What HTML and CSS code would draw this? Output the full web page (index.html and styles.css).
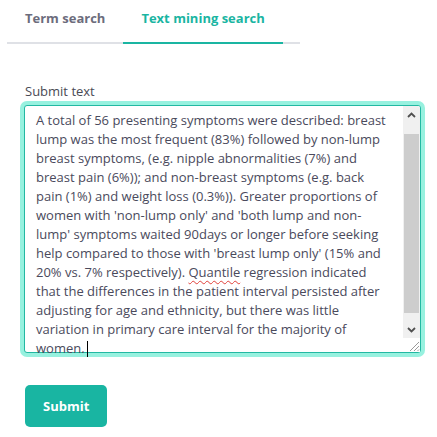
FILE: index.html
```html
<!DOCTYPE html>
<html lang="en">
<head>
<meta charset="utf-8">
<title>Text mining search</title>
<link rel="stylesheet" href="styles.css">
</head>
<body>
  <nav class="tabs">
    <a class="tab">Term search</a>
    <a class="tab tab-active">Text mining search</a>
  </nav>
  <form class="form">
    <label class="label">Submit text</label>
    <div class="textbox">
      <div class="textbox-text">
        <span class="line">A total of 56 presenting symptoms were described: breast</span>
        <span class="line">lump was the most frequent (83%) followed by non-lump</span>
        <span class="line">breast symptoms, (e.g. nipple abnormalities (7%) and</span>
        <span class="line">breast pain (6%)); and non-breast symptoms (e.g. back</span>
        <span class="line">pain (1%) and weight loss (0.3%)). Greater proportions of</span>
        <span class="line">women with 'non-lump only' and 'both lump and non-</span>
        <span class="line">lump' symptoms waited 90days or longer before seeking</span>
        <span class="line">help compared to those with 'breast lump only' (15% and</span>
        <span class="line">20% vs. 7% respectively). <span class="misspelt">Quantile</span> regression indicated</span>
        <span class="line">that the differences in the patient interval persisted after</span>
        <span class="line">adjusting for age and ethnicity, but there was little</span>
        <span class="line">variation in primary care interval for the majority of</span>
        <span class="line">women.<span class="caret"></span></span>
      </div>
      <div class="scrollbar">
        <div class="sb-btn">
          <svg width="9" height="6" viewBox="0 0 9 6"><path d="M1 5 L4.5 1.5 L8 5" fill="none" stroke="#505050" stroke-width="1.8"/></svg>
        </div>
        <div class="sb-track"><div class="sb-thumb"></div></div>
        <div class="sb-btn">
          <svg width="9" height="6" viewBox="0 0 9 6"><path d="M1 1 L4.5 4.5 L8 1" fill="none" stroke="#505050" stroke-width="1.8"/></svg>
        </div>
        <div class="sb-corner">
          <svg width="14" height="14" viewBox="0 0 14 14"><path d="M4 13 L13 4 M8 13 L13 8 M11.5 13 L13 11.5" fill="none" stroke="#9a9a9a" stroke-width="1"/></svg>
        </div>
      </div>
    </div>
    <button type="button" class="submit">Submit</button>
  </form>
</body>
</html>
```
FILE: styles.css
```css
* { box-sizing: border-box; }
body {
  margin: 0;
  background: #ffffff;
  font-family: "Open Sans", "Noto Sans", sans-serif;
  color: #4d4d5c;
}
.tabs {
  display: flex;
  margin-left: 7px;
  width: 293px;
  border-bottom: 2px solid #dfe1e6;
}
.tab {
  display: block;
  padding: 8px 18px 14px;
  font-size: 13px;
  line-height: 20px;
  font-weight: 700;
  color: #6c6c7c;
}
.tab-active {
  color: #1ab5a2;
  border-bottom: 2px solid #1ab5a2;
  margin-bottom: -2px;
  padding-bottom: 14px;
}
.form {
  display: flex;
  flex-direction: column;
  align-items: flex-start;
  padding: 37px 0 0 24px;
}
.label {
  display: block;
  font-size: 13px;
  line-height: 20px;
  color: #4a4a55;
  padding-left: 1px;
  margin-bottom: 4px;
}
.textbox {
  display: flex;
  width: 397px;
  height: 248px;
  border: 1px solid #22b8a2;
  border-radius: 3px;
  box-shadow: 0 0 0 4px #97f1df;
  background: #fff;
}
.textbox-text {
  flex: 1;
  padding: 5px 0 0 11px;
  font-size: 13px;
  line-height: 19px;
  color: #4a4a5c;
}
.line {
  display: block;
  white-space: nowrap;
}
.misspelt {
  text-decoration: underline wavy #e0403a;
  text-decoration-thickness: 1px;
  text-underline-offset: 3px;
}
.caret {
  display: inline-block;
  width: 1px;
  height: 16px;
  background: #000;
  vertical-align: -4px;
  margin-left: 2px;
}
.scrollbar {
  width: 17px;
  display: flex;
  flex-direction: column;
  background: #f0f0f0;
  border-radius: 0 2px 2px 0;
}
.sb-btn {
  height: 17px;
  display: flex;
  align-items: center;
  justify-content: center;
}
.sb-track {
  flex: 1;
  padding: 11px 1px 8px;
}
.sb-thumb {
  height: 100%;
  background: #cdcdcd;
}
.sb-corner {
  height: 14px;
  background: #fff;
  display: flex;
  justify-content: flex-end;
  align-items: flex-end;
}
.submit {
  margin: 32px 0 0 1px;
  height: 42px;
  padding: 0 18px;
  border: none;
  border-radius: 5px;
  background: #19b5a2;
  color: #fff;
  font-family: "Open Sans", "Noto Sans", sans-serif;
  font-size: 13px;
  font-weight: 700;
}
```
